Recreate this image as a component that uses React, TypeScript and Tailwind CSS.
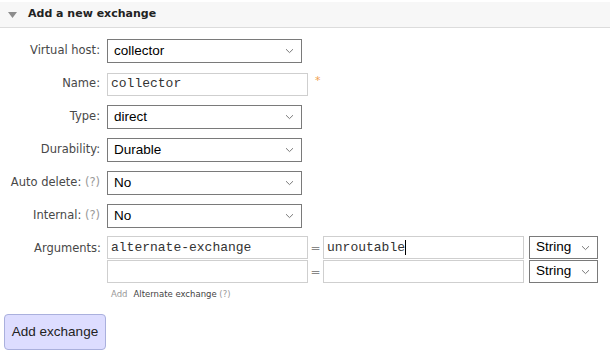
import React from "react";

const label = "text-[11.5px] text-[#484848] [font-family:'DejaVu_Sans',Verdana,sans-serif]";

function Chevron() {
  return (
    <svg width="9" height="6" viewBox="0 0 9 6" className="shrink-0">
      <path d="M1 1.2 L4.5 4.6 L8 1.2" fill="none" stroke="#7a7a7a" strokeWidth="1" />
    </svg>
  );
}

function Select({ value, w = "w-[195px] h-[24px]" }: { value: string; w?: string }) {
  return (
    <div
      className={`${w} flex items-center justify-between pl-[6px] pr-[7px] bg-white border border-[#7a7a7a] text-[13.5px] text-black [font-family:'Liberation_Sans',Arial,sans-serif]`}
    >
      <span>{value}</span>
      <Chevron />
    </div>
  );
}

function TextBox({ value, caret }: { value?: string; caret?: boolean }) {
  return (
    <div className="w-[201px] h-[23px] flex items-center px-[3px] bg-white border border-[#cfcfcf] text-[13px] text-[#333] [font-family:'Liberation_Mono','Courier_New',monospace]">
      {value}
      {caret && <span className="inline-block w-px h-[15px] bg-black" />}
    </div>
  );
}

function Row({ name, help, children }: { name: string; help?: boolean; children: React.ReactNode }) {
  return (
    <div className="flex items-center h-[24px]">
      <div className={`w-[101px] text-right pr-[1px] ${label}`}>
        {name}:{help && <span className="text-[#999]"> (?)</span>}
      </div>
      <div className="ml-[6px] flex items-center">{children}</div>
    </div>
  );
}

export default function App() {
  return (
    <div className="w-[610px] h-[357px] bg-white pt-[2px]">
      <div className="h-[26px] bg-[#f7f7f7] border-b border-[#dcdcdc] flex items-center pl-[8px]">
        <svg width="9" height="6" viewBox="0 0 9 6">
          <path d="M0 0 H9 L4.5 6 Z" fill="#8c8c8c" />
        </svg>
        <span className="ml-[11px] text-[11px] font-bold text-[#222] [font-family:'DejaVu_Sans',Verdana,sans-serif]">
          Add a new exchange
        </span>
      </div>

      <div className="flex flex-col gap-[9px] mt-[11px]">
        <Row name="Virtual host">
          <Select value="collector" />
        </Row>
        <Row name="Name">
          <TextBox value="collector" />
          <span className="ml-[7px] -mt-[6px] text-[11px] text-[#f0a050] [font-family:'DejaVu_Sans',sans-serif]">*</span>
        </Row>
        <Row name="Type">
          <Select value="direct" />
        </Row>
        <Row name="Durability">
          <Select value="Durable" />
        </Row>
        <Row name="Auto delete" help>
          <Select value="No" />
        </Row>
        <Row name="Internal" help>
          <Select value="No" />
        </Row>
      </div>

      <div className="flex mt-[8px]">
        <div className={`w-[101px] text-right pt-[4px] ${label}`}>Arguments:</div>
        <div className="ml-[6px] flex flex-col gap-px">
          <div className="flex items-center">
            <TextBox value="alternate-exchange" />
            <span className="w-[15px] text-center text-[12px] text-[#888] [font-family:'DejaVu_Sans',sans-serif]">=</span>
            <TextBox value="unroutable" caret />
            <div className="ml-[5px]">
              <Select value="String" w="w-[69px] h-[23px]" />
            </div>
          </div>
          <div className="flex items-center">
            <TextBox />
            <span className="w-[15px] text-center text-[12px] text-[#888] [font-family:'DejaVu_Sans',sans-serif]">=</span>
            <TextBox />
            <div className="ml-[5px]">
              <Select value="String" w="w-[69px] h-[23px]" />
            </div>
          </div>
          <div className="mt-[4px] pl-[4px] text-[8.5px] [font-family:'DejaVu_Sans',Verdana,sans-serif]">
            <span className="text-[#999]">Add</span>
            <span className="ml-[6px] text-[#444]">Alternate exchange</span>
            <span className="text-[#999]"> (?)</span>
          </div>
        </div>
      </div>

      <button className="ml-[4px] mt-[13px] w-[102px] h-[36px] rounded-[4px] bg-[#ddddff] border border-[#aab0dd] text-[13.5px] text-[#222] [font-family:'Liberation_Sans',Arial,sans-serif]">
        Add exchange
      </button>
    </div>
  );
}
